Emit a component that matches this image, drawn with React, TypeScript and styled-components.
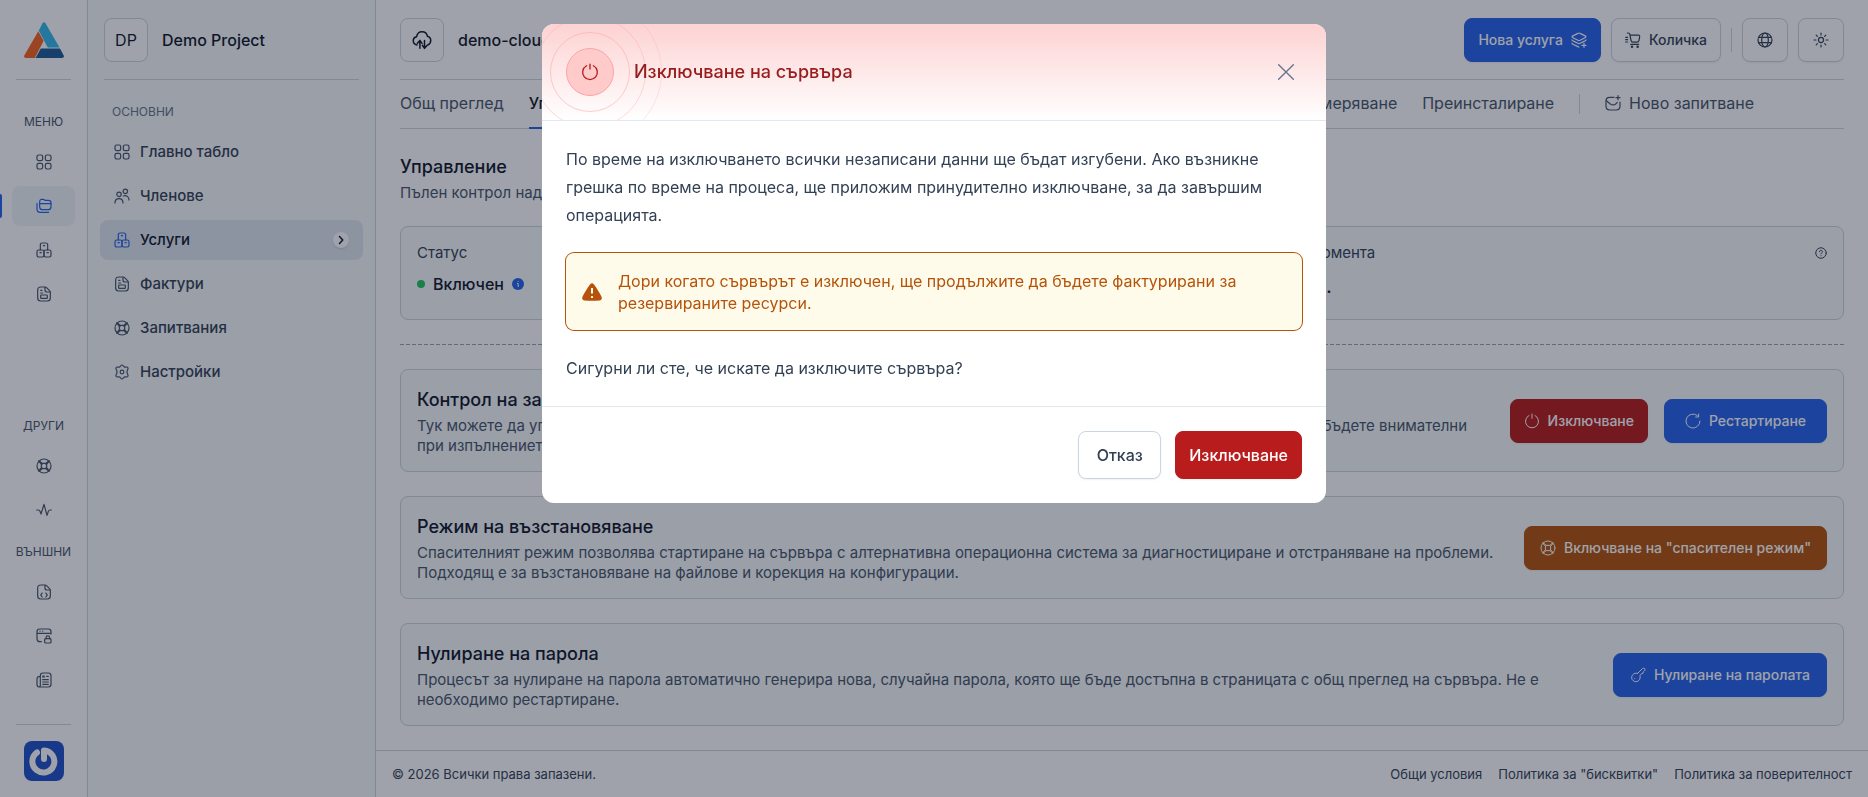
import React from "react";
import styled, { createGlobalStyle } from "styled-components";

const c = {
  white: "#ffffff",
  s50: "#f8fafc",
  s100: "#f1f5f9",
  s200: "#e2e8f0",
  s300: "#cbd5e1",
  s400: "#94a3b8",
  s500: "#64748b",
  s600: "#475569",
  s700: "#334155",
  s900: "#0f172a",
  blue: "#2563eb",
  red: "#b91c1c",
  amber: "#b45309",
};

const Global = createGlobalStyle`
  *, *::before, *::after { box-sizing: border-box; }
  body { margin: 0; background: ${c.white}; }
  body, button { font-family: Inter, "Noto Sans", sans-serif; }
  h1, h2, h3, p, ul { margin: 0; padding: 0; }
  a { color: inherit; text-decoration: none; }
  button { cursor: pointer; }
`;

/* ---------- icons ---------- */

const Svg = styled.svg`
  display: block;
  flex: none;
  fill: none;
  stroke: currentColor;
  stroke-linecap: round;
  stroke-linejoin: round;
`;

const shapes = {
  grid: (
    <>
      <rect x="1.5" y="1.5" width="8.5" height="8.5" rx="2.5" />
      <rect x="14" y="1.5" width="8.5" height="8.5" rx="2.5" />
      <rect x="1.5" y="14" width="8.5" height="8.5" rx="2.5" />
      <rect x="14" y="14" width="8.5" height="8.5" rx="2.5" />
    </>
  ),
  folders: (
    <>
      <path d="M5.5 7V5.500C5.500 3.500 6.500 2 8.500 2h2.200c1.500 0 2 .6 2.800 1.500h5C21.500 3.500 22.500 5 22.500 7.500v5.500c0 3-1.500 4.500-4.500 4.500h-8c-3 0-4.500-1.500-4.500-4.500z" />
      <path d="M5.500 8.500h17M1.500 8v8.500c0 4 1.500 5 5 5H19" />
    </>
  ),
  boxes: (
    <>
      <path d="M6.500 12V4.500c0-2 .8-3 2.800-3h5.400c2 0 2.800 1 2.800 3V12" />
      <rect x="1.500" y="12" width="10.500" height="10.500" rx="2.500" />
      <rect x="12" y="12" width="10.500" height="10.500" rx="2.500" />
      <path d="M11 5.500h2M6 16h2M16.500 16h2" />
    </>
  ),
  invoice: (
    <>
      <path d="M13.500 1.500H7.500C4.500 1.500 2.500 3 2.500 6v12c0 3 1.500 4.500 4.500 4.500h10c3 0 4.500-1.500 4.500-4.500V9.500c0-1-.4-1.700-1.200-2.500l-4.500-4.500c-.7-.7-1.200-1-2.300-1z" />
      <path d="M13.500 2v4c0 2 1 3 3 3h4.500M7 6.500h2M7 10.500h3" />
      <rect x="7" y="13.500" width="10" height="5" rx="1" />
    </>
  ),
  life: (
    <>
      <circle cx="12" cy="12" r="10.500" />
      <rect x="8" y="8" width="8" height="8" rx="2.500" />
      <path d="M8.500 10 4 4.500M10 8.500 4.500 4M15.500 10 20 4.500M14 8.500 19.500 4M8.500 14 4 19.500M10 15.500 4.500 20M15.500 14l4.500 5.500M14 15.500l5.500 4.500" />
    </>
  ),
  pulse: <path d="M1 12h2.500c1.500 0 2 .5 2.500 2l1.500 4L12 3.500 16.500 20l2-6c.5-1.500 1-2 2.500-2h2" />,
  code: (
    <>
      <path d="M13.500 1.500H7.500C4.500 1.500 2.500 3 2.500 6v12c0 3 1.500 4.500 4.500 4.500h10c3 0 4.500-1.500 4.500-4.500V9.500c0-1-.4-1.700-1.200-2.500l-4.500-4.500c-.7-.7-1.200-1-2.300-1z" />
      <path d="M13.500 2v4c0 2 1 3 3 3h4.500M9.500 13.500C8 13.500 8.500 16 7 16.500c1.500.5 1 3 2.500 3M14.500 13.500c1.500 0 1 2.500 2.500 3-1.500.5-1 3-2.500 3" />
    </>
  ),
  browserLock: (
    <>
      <path d="M22.500 9V5.500c0-3-1-4-4-4h-13c-3 0-4 1-4 4V16c0 3 1.500 4.500 4.500 4.500h2M1.500 8h21M6 4.800h.1M10 4.800h.1" />
      <rect x="13" y="16" width="9.500" height="6.500" rx="1.500" />
      <path d="M15 16v-1.500a2.700 2.700 0 0 1 5.500 0V16" />
    </>
  ),
  news: (
    <>
      <path d="M6.500 6.500C3 6.500 1.500 7.500 1.500 10.500v8c0 2.500 1 4 3 4s2-1 2-3V5.500c0-3 1-4 4-4h8c3 0 4 1 4 4v13c0 3-1 4-4 4h-14" />
      <path d="M10 6h2.500M10 7.500h2.500M16 6.500h2.500M10 11.500h8.500M10 15h8.500M10 18.500h8.500" />
    </>
  ),
  people: (
    <>
      <circle cx="7.500" cy="9.500" r="3.300" />
      <circle cx="17" cy="5" r="3.300" />
      <path d="M1.500 22.500c0-4 2-6.500 6-6.500s6 2.500 6 6.500M14 12c5-1.500 8.500 1 8.500 6" />
    </>
  ),
  gear: (
    <>
      <path d="M12 1.500c2 0 2 2.700 4 3.200 1.600.5 3.600-1.200 4.700.6 1.500 2.400-1.200 3.200-1.200 6.700s2.700 4.300 1.200 6.700c-1.100 1.800-3.100.1-4.700.6-2 .5-2 3.200-4 3.200s-2-2.700-4-3.200c-1.600-.5-3.600 1.200-4.700-.6C1.800 16.300 4.500 15.500 4.500 12S1.800 7.700 3.300 5.300C4.400 3.500 6.400 5.200 8 4.700c2-.5 2-3.200 4-3.200z" />
      <circle cx="12" cy="12" r="2.800" />
    </>
  ),
  chevron: <path d="m9 5 6.500 7L9 19" />,
  cloud: (
    <>
      <path d="M6 18C3 17.500 1.500 15.500 1.500 13c0-2.700 1.500-4.500 4-5C6.200 4 8.800 2 12 2c3.500 0 6 2.300 6.500 5.500 2.500.7 4 2.700 4 5.200s-1.500 4.300-3.500 5.300" />
      <path d="M9.500 22V13m-3 3 3-3.500 2.500 3.500M15 12.500v9m-2.500-3 2.500 3.500 3-3.500" />
    </>
  ),
  layers: (
    <>
      <path d="M12 1.500c.6 0 1.200.3 2.400.9l6 3c1.400.7 2.100 1.100 2.100 1.800s-.7 1.100-2.100 1.800l-6 3c-1.200.6-1.800.9-2.400.9s-1.200-.3-2.400-.9l-6-3C2.200 8.300 1.500 7.900 1.500 7.200s.7-1.100 2.100-1.800l6-3c1.200-.6 1.800-.9 2.400-.9z" />
      <path d="M1.500 12c.6 1 1.200 1.200 2.100 1.700l6 2.900c1.200.6 1.800.9 2.400.9s1.200-.3 2.400-.9l6-2.900c.9-.5 1.500-.7 2.100-1.700M1.500 17c.6 1 1.200 1.200 2.100 1.700l6 2.900c.8.500 1.400.8 2.400.9M19.500 17v6M16.500 20h6" />
    </>
  ),
  cart: (
    <>
      <path d="M3.500 1.500H5c1.500 0 2 .5 2.300 2L9 12.500c.3 2 1.200 2.700 3 2.700h6c1.800 0 2.700-.8 3-2.700l1-5.500c.2-1.500-.3-2.300-2-2.300H8M1 8h3M1 11.500h3M1 15h3M8.500 18.500h12" />
      <circle cx="10.500" cy="22" r="1" />
      <circle cx="19" cy="22" r="1" />
    </>
  ),
  globe: (
    <>
      <circle cx="12" cy="12" r="10.500" />
      <ellipse cx="12" cy="12" rx="5" ry="10.500" />
      <path d="M2.500 8h19M2.500 16h19" />
    </>
  ),
  sun: (
    <>
      <circle cx="12" cy="12" r="3.800" />
      <path d="M12 1.500v3M12 19.500v3M1.500 12h3M19.500 12h3M4.800 4.800l1.700 1.700M17.500 17.500l1.700 1.700M19.200 4.800l-1.700 1.700M6.500 17.500l-1.700 1.700" />
    </>
  ),
  mail: (
    <>
      <path d="M13.500 3.500H7c-4 0-5.500 1.500-5.500 5.500v8c0 4 1.500 5.500 5.500 5.500h10c4 0 5.500-1.500 5.500-5.500v-6.500" />
      <path d="m2 8.500 6 5c2.700 2 5.300 2 8 0l2.500-2.500M19.500 1v6M16.500 4h6" />
    </>
  ),
  power: <path d="M12 1.500v6.500M7.500 3.700a9.800 9.800 0 1 0 9 0" />,
  restart: <path d="M22.500 12A10.500 10.500 0 1 1 18.500 3.800M20.500 1.500v4.500h-4.500" />,
  key: (
    <>
      <path d="M11.500 9.500 18 3c1.300-1.300 2.800-1.800 3.900-.8s.8 2.500-.4 3.800l-1.700 1.500-.3 2-2.200.7-2.500 2.500c.8 2.800.5 5.200-1.300 7.200-2.300 2.600-6.200 2.800-8.800.6-2.700-2.300-3-6-.8-8.600 2-2.300 4.600-3 7.600-2.400z" />
      <path d="M7 17.500h.1" />
    </>
  ),
  help: (
    <>
      <circle cx="12" cy="12" r="10.500" />
      <path d="M9 9.500C9 7.700 10.300 6.700 12 6.700s3 1 3 2.800c0 2-3 2-3 4.300M12 17.300h.1" />
    </>
  ),
  close: <path d="M1 1l22 22M23 1 1 23" />,
};

type IconName = keyof typeof shapes;

const Icon = ({ name, size = 16, weight = 1.8 }: { name: IconName; size?: number; weight?: number }) => (
  <Svg width={size} height={size} viewBox="0 0 24 24" strokeWidth={weight} aria-hidden="true">
    {shapes[name]}
  </Svg>
);

const Logo = () => (
  <svg width="40" height="36" viewBox="0 0 40 36" role="img" aria-label="Начало">
    <path fill="#32b8ea" d="M18.500 1.200c.8-1.400 2.200-1.400 3 0L35.500 25.500H25c-.9 0-1.400-.3-1.800-1L14.800 8.500z" />
    <path fill="#f86320" d="M14.300 9.300 19.200 18c.3.700.3 1.100 0 1.700L10.800 36H2c-1.600 0-2.500-1.300-1.600-2.800z" />
    <path fill="#1b5d97" d="M16.800 26.500H36l3.600 6.700c.8 1.500 0 2.800-1.600 2.800H11.500z" />
  </svg>
);

const Avatar = () => (
  <svg width="40" height="40" viewBox="0 0 40 40" role="img" aria-label="Профил">
    <rect width="40" height="40" rx="8" fill="#1e50c8" />
    <path d="M20 9.500v8.500M13 11.500a11 11 0 1 0 7-2" fill="none" stroke="#fff" strokeWidth="6" strokeLinecap="round" />
  </svg>
);

const InfoBadge = () => (
  <svg width="12" height="12" viewBox="0 0 12 12" aria-label="Информация" role="img">
    <circle cx="6" cy="6" r="6" fill={c.blue} />
    <path d="M5 5.500h1.200V9M6.200 3v.8" fill="none" stroke="#fff" />
  </svg>
);

const WarningSign = () => (
  <svg width="20" height="18" viewBox="0 0 20 18" aria-hidden="true">
    <path
      fill={c.amber}
      d="M8.200 1.200c.9-1.300 2.700-1.300 3.600 0 2.700 3.600 5.500 8 7.600 12.300.9 1.800.2 3.800-2 4-4.900.4-9.900.4-14.800 0-2.200-.2-2.900-2.200-2-4C2.700 9.200 5.500 4.800 8.200 1.200z"
    />
    <path d="M10 5v5.500M10 13v2" stroke="#fffbeb" strokeWidth="2" />
  </svg>
);

/* ---------- shell ---------- */

const Shell = styled.div`
  display: flex;
  min-height: 100vh;
  color: ${c.s700};
  font-size: 15px;
  line-height: 20px;
`;

const Rail = styled.nav`
  display: flex;
  flex-direction: column;
  width: 88px;
  flex: none;
  padding: 0 12px 16px;
  border-right: 1px solid ${c.s300};
`;

const RailHead = styled.div`
  display: flex;
  justify-content: center;
  align-items: center;
  height: 80px;
  margin: 0 4px;
  border-bottom: 1px solid ${c.s300};
`;

const RailGroup = styled.div<{ $top: number; $push?: boolean }>`
  margin-top: ${(p) => (p.$push ? "auto" : `${p.$top}px`)};
`;

const RailLabel = styled.div`
  height: 20px;
  margin: 0 -12px 10px;
  text-align: center;
  font-size: 12px;
  color: ${c.s600};
`;

const RailLink = styled.a<{ $active?: boolean }>`
  position: relative;
  display: flex;
  align-items: center;
  justify-content: center;
  height: 40px;
  border-radius: 8px;
  color: ${(p) => (p.$active ? c.blue : c.s600)};
  background: ${(p) => (p.$active ? c.s100 : "transparent")};
  & + & {
    margin-top: 4px;
  }
  &::before {
    content: "";
    display: ${(p) => (p.$active ? "block" : "none")};
    position: absolute;
    left: -12px;
    width: 2px;
    height: 24px;
    background: ${c.blue};
    border-radius: 0 2px 2px 0;
  }
`;

const RailFoot = styled.div`
  display: flex;
  justify-content: center;
  margin: 24px 4px 0;
  padding-top: 16px;
  border-top: 1px solid ${c.s300};
`;

const Side = styled.nav`
  width: 288px;
  flex: none;
  padding: 0 12px;
  background: ${c.s50};
  border-right: 1px solid ${c.s300};
`;

const SideHead = styled.div`
  display: flex;
  align-items: center;
  gap: 14px;
  height: 80px;
  margin: 0 4px;
  border-bottom: 1px solid ${c.s300};
`;

const Tile = styled.div`
  display: flex;
  align-items: center;
  justify-content: center;
  width: 44px;
  height: 44px;
  border: 1px solid ${c.s300};
  border-radius: 8px;
  background: ${c.white};
  color: ${c.s900};
  font-size: 16px;
`;

const HeadName = styled.h1`
  font-size: 16px;
  font-weight: 500;
  line-height: 24px;
  color: ${c.s900};
`;

const SideLabel = styled.div`
  padding: 22px 12px 10px;
  font-size: 12px;
  color: ${c.s500};
`;

const SideLink = styled.a<{ $active?: boolean }>`
  display: flex;
  align-items: center;
  gap: 10px;
  height: 40px;
  margin-bottom: 4px;
  padding: 0 14px;
  border-radius: 8px;
  font-weight: 500;
  background: ${(p) => (p.$active ? c.s200 : "transparent")};
  color: ${(p) => (p.$active ? c.s900 : c.s700)};
  & > svg {
    color: ${(p) => (p.$active ? c.blue : c.s600)};
  }
`;

const Dot = styled.span`
  display: flex;
  align-items: center;
  justify-content: center;
  width: 16px;
  height: 16px;
  margin-left: auto;
  border-radius: 50%;
  background: ${c.white};
  box-shadow: 0 1px 2px rgba(15, 23, 42, 0.15);
`;

const Main = styled.div`
  display: flex;
  flex-direction: column;
  flex: 1;
  min-width: 0;
`;

const Content = styled.main`
  flex: 1;
  padding: 0 24px 24px;
`;

const TopBar = styled.header`
  display: flex;
  align-items: center;
  height: 80px;
  border-bottom: 1px solid ${c.s300};
`;

const TopTitle = styled.div`
  display: flex;
  align-items: center;
  gap: 14px;
  margin-right: auto;
`;

const TopActions = styled.div`
  display: flex;
  align-items: center;
  gap: 10px;
`;

const Rule = styled.span<{ $h: number }>`
  width: 1px;
  height: ${(p) => p.$h}px;
  background: ${c.s300};
`;

const tones = {
  blue: [c.blue, c.white, c.blue],
  red: [c.red, c.white, c.red],
  amber: [c.amber, c.white, c.amber],
  plain: [c.white, c.s700, c.s300],
};

const Button = styled.button<{ $tone: keyof typeof tones; $large?: boolean; $square?: boolean; $min?: number }>`
  display: flex;
  align-items: center;
  justify-content: center;
  gap: 8px;
  height: ${(p) => (p.$large ? 48 : 44)}px;
  width: ${(p) => (p.$square ? "46px" : "auto")};
  min-width: ${(p) => p.$min ?? 0}px;
  padding: 0 ${(p) => (p.$square ? 0 : 13)}px;
  border: 1px solid ${(p) => tones[p.$tone][2]};
  border-radius: 8px;
  background: ${(p) => tones[p.$tone][0]};
  color: ${(p) => tones[p.$tone][1]};
  font-size: ${(p) => (p.$large ? 16 : 14)}px;
  font-weight: 500;
  white-space: nowrap;
  box-shadow: 0 1px 2px rgba(15, 23, 42, 0.06);
`;

const Tabs = styled.nav`
  display: flex;
  align-items: center;
  height: 49px;
  gap: 25px;
  padding-right: 90px;
  border-bottom: 1px solid ${c.s300};
  font-size: 16px;
  white-space: nowrap;
`;

const TabSet = styled.div`
  display: flex;
  gap: 25px;
  flex: 1 1 0;
  min-width: 0;
  overflow: hidden;
`;

const Tab = styled.a<{ $active?: boolean }>`
  display: flex;
  align-items: center;
  gap: 8px;
  height: 49px;
  color: ${(p) => (p.$active ? c.s900 : c.s600)};
  font-weight: ${(p) => (p.$active ? 500 : 400)};
  border-bottom: 2px solid ${(p) => (p.$active ? c.blue : "transparent")};
`;

const Heading = styled.h2`
  font-size: 18px;
  font-weight: 500;
  line-height: 28px;
  color: ${c.s900};
`;

const Text = styled.p`
  color: ${c.s600};
  white-space: pre-line;
`;

const PageHead = styled.div`
  display: grid;
  gap: 2px;
  padding: 24px 0 23px;
`;

const Stats = styled.div`
  display: grid;
  grid-template-columns: 1fr 1fr;
  gap: 24px;
`;

const Stat = styled.section`
  height: 94px;
  padding: 16px;
  border: 1px solid ${c.s300};
  border-radius: 8px;
  background: ${c.s50};
`;

const StatHead = styled.div`
  display: flex;
  align-items: center;
  justify-content: space-between;
  color: ${c.s700};
`;

const StatValue = styled.div<{ $big?: boolean }>`
  display: flex;
  align-items: center;
  gap: 8px;
  margin-top: ${(p) => (p.$big ? 12 : 9)}px;
  font-size: ${(p) => (p.$big ? 18 : 16)}px;
  font-weight: 500;
  line-height: 24px;
  color: ${c.s900};
`;

const Led = styled.span`
  width: 8px;
  height: 8px;
  border-radius: 50%;
  background: #22c55e;
`;

const Dashes = styled.hr`
  height: 1px;
  margin: 24px 0;
  border: 0;
  background: repeating-linear-gradient(90deg, ${c.s400} 0 4px, transparent 4px 6px);
`;

const Card = styled.section`
  display: flex;
  align-items: center;
  gap: 16px;
  min-height: 103px;
  padding: 0 16px;
  border: 1px solid ${c.s300};
  border-radius: 8px;
  background: ${c.s50};
  & + & {
    margin-top: 24px;
  }
`;

const CardBody = styled.div`
  display: grid;
  gap: 2px;
  flex: 1;
  min-width: 0;
`;

const Footer = styled.footer`
  display: flex;
  align-items: center;
  gap: 16px;
  height: 47px;
  padding: 0 16px;
  border-top: 1px solid ${c.s300};
  font-size: 13px;
  color: ${c.s700};
  & > span {
    margin-right: auto;
  }
`;

/* ---------- dialog ---------- */

const Backdrop = styled.div`
  position: fixed;
  inset: 0;
  display: flex;
  align-items: flex-start;
  justify-content: center;
  padding: 24px;
  background: rgba(15, 23, 42, 0.4);
`;

const Dialog = styled.div`
  width: 100%;
  max-width: 784px;
  overflow: hidden;
  border-radius: 12px;
  background: ${c.white};
  color: ${c.s700};
  font-size: 16px;
  line-height: 28px;
`;

const DialogHead = styled.div`
  position: relative;
  display: flex;
  align-items: center;
  gap: 20px;
  height: 97px;
  padding: 0 24px;
  overflow: hidden;
  border-bottom: 1px solid ${c.s200};
  background: linear-gradient(#fdd2d2, #ffffff);
`;

const DialogTitle = styled.h2`
  position: relative;
  margin-right: auto;
  font-size: 18px;
  font-weight: 500;
  color: #991b1b;
`;

const Emblem = styled.span`
  position: relative;
  display: flex;
  align-items: center;
  justify-content: center;
  width: 48px;
  height: 48px;
  border: 1px solid #fca5a5;
  border-radius: 50%;
  background: #fecaca;
  color: ${c.red};
`;

const Ring = styled.span<{ $r: number; $o: number }>`
  position: absolute;
  top: calc(50% - ${(p) => p.$r}px);
  left: calc(50% - ${(p) => p.$r}px);
  width: ${(p) => p.$r * 2}px;
  height: ${(p) => p.$r * 2}px;
  border: 1px solid #fca5a5;
  border-radius: 50%;
  opacity: ${(p) => p.$o};
`;

const CloseButton = styled.button`
  display: flex;
  align-items: center;
  justify-content: center;
  width: 32px;
  height: 32px;
  padding: 0;
  border: 0;
  background: none;
  color: ${c.s500};
`;

const DialogBody = styled.div`
  display: grid;
  gap: 24px;
  padding: 24px;
  white-space: pre-line;
`;

const Alert = styled.div`
  display: flex;
  align-items: center;
  gap: 16px;
  min-height: 77px;
  padding: 0 16px;
  border-radius: 8px;
  background: #fffbeb;
  box-shadow: 0 0 0 1px ${c.amber};
  color: ${c.amber};
  line-height: 22px;
`;

const DialogFoot = styled.div`
  display: flex;
  justify-content: flex-end;
  gap: 14px;
  padding: 24px;
  border-top: 1px solid ${c.s200};
`;

/* ---------- data ---------- */

const sideItems: [IconName, string][] = [
  ["grid", "Главно табло"],
  ["people", "Членове"],
  ["boxes", "Услуги"],
  ["invoice", "Фактури"],
  ["life", "Запитвания"],
  ["gear", "Настройки"],
];

const RailLinks = ({ items, active }: { items: [IconName, string][]; active?: IconName }) => (
  <>
    {items.map(([icon, label]) => (
      <RailLink key={icon} href="#" aria-label={label} $active={icon === active}>
        <Icon name={icon} />
      </RailLink>
    ))}
  </>
);

export default function App() {
  return (
    <div lang="bg">
      <Global />
      <Shell>
        <Rail>
          <RailHead>
            <Logo />
          </RailHead>
          <RailGroup $top={32}>
            <RailLabel>МЕНЮ</RailLabel>
            <RailLinks
              active="folders"
              items={[
                ["grid", "Табло"],
                ["folders", "Проекти"],
                ["boxes", "Услуги"],
                ["invoice", "Фактури"],
              ]}
            />
          </RailGroup>
          <RailGroup $top={0} $push>
            <RailLabel>ДРУГИ</RailLabel>
            <RailLinks
              items={[
                ["life", "Помощ"],
                ["pulse", "Статус"],
              ]}
            />
          </RailGroup>
          <RailGroup $top={12}>
            <RailLabel>ВЪНШНИ</RailLabel>
            <RailLinks
              items={[
                ["code", "API"],
                ["browserLock", "Сигурност"],
                ["news", "Новини"],
              ]}
            />
          </RailGroup>
          <RailFoot>
            <Avatar />
          </RailFoot>
        </Rail>

        <Side>
          <SideHead>
            <Tile>DP</Tile>
            <HeadName>Demo Project</HeadName>
          </SideHead>
          <SideLabel>ОСНОВНИ</SideLabel>
          {sideItems.map(([icon, label]) => {
            const active = label === "Услуги";
            return (
              <SideLink key={label} href="#" $active={active}>
                <Icon name={icon} />
                {label}
                {active && (
                  <Dot>
                    <Icon name="chevron" size={12} weight={3} />
                  </Dot>
                )}
              </SideLink>
            );
          })}
        </Side>

        <Main>
          <Content>
            <TopBar>
              <TopTitle>
                <Tile>
                  <Icon name="cloud" size={20} />
                </Tile>
                <HeadName as="div">demo-cloud</HeadName>
              </TopTitle>
              <TopActions>
                <Button $tone="blue">
                  Нова услуга
                  <Icon name="layers" />
                </Button>
                <Button $tone="plain">
                  <Icon name="cart" />
                  Количка
                </Button>
                <Rule $h={24} />
                <Button $tone="plain" $square aria-label="Език">
                  <Icon name="globe" />
                </Button>
                <Button $tone="plain" $square aria-label="Тема">
                  <Icon name="sun" />
                </Button>
              </TopActions>
            </TopBar>

            <Tabs>
              <TabSet>
                <Tab href="#">Общ преглед</Tab>
                <Tab href="#" $active>
                  Управление
                </Tab>
                <Tab href="#">Конзола</Tab>
                <Tab href="#">Мрежа</Tab>
              </TabSet>
              <Tab href="#">Преоразмеряване</Tab>
              <Tab href="#">Преинсталиране</Tab>
              <Rule $h={20} />
              <Tab href="#">
                <Icon name="mail" />
                Ново запитване
              </Tab>
            </Tabs>

            <PageHead>
              <Heading>Управление</Heading>
              <Text>Пълен контрол над сървъра</Text>
            </PageHead>

            <Stats>
              <Stat>
                <StatHead>Статус</StatHead>
                <StatValue>
                  <Led />
                  Включен
                  <InfoBadge />
                </StatValue>
              </Stat>
              <Stat>
                <StatHead>
                  Генерирани такси до момента
                  <Icon name="help" size={12} weight={2} />
                </StatHead>
                <StatValue $big>10,00 EUR / 19,56 лв.</StatValue>
              </Stat>
            </Stats>

            <Dashes />

            <Card>
              <CardBody>
                <Heading>Контрол на захранването</Heading>
                <Text>
                  {"Тук можете да управлявате захранването на вашия сървър, като го изключвате, включвате и/или го рестартирате. Моля, бъдете внимателни\nпри изпълнението на тези действия."}
                </Text>
              </CardBody>
              <Button $tone="red">
                <Icon name="power" weight={1.5} />
                Изключване
              </Button>
              <Button $tone="blue" $min={163}>
                <Icon name="restart" weight={1.5} />
                Рестартиране
              </Button>
            </Card>
            <Card>
              <CardBody>
                <Heading>Режим на възстановяване</Heading>
                <Text>
                  {"Спасителният режим позволява стартиране на сървъра с алтернативна операционна система за диагностициране и отстраняване на проблеми.\nПодходящ е за възстановяване на файлове и корекция на конфигурации."}
                </Text>
              </CardBody>
              <Button $tone="amber" $min={303}>
                <Icon name="life" weight={1.5} />
                Включване на "спасителен режим"
              </Button>
            </Card>
            <Card>
              <CardBody>
                <Heading>Нулиране на парола</Heading>
                <Text>
                  {"Процесът за нулиране на парола автоматично генерира нова, случайна парола, която ще бъде достъпна в страницата с общ преглед на сървъра. Не е\nнеобходимо рестартиране."}
                </Text>
              </CardBody>
              <Button $tone="blue" $min={214}>
                <Icon name="key" weight={1.5} />
                Нулиране на паролата
              </Button>
            </Card>
          </Content>

          <Footer>
            <span>© 2026 Всички права запазени.</span>
            <a href="#">Общи условия</a>
            <a href="#">Политика за "бисквитки"</a>
            <a href="#">Политика за поверителност</a>
          </Footer>
        </Main>
      </Shell>

      <Backdrop>
        <Dialog role="dialog" aria-modal="true" aria-labelledby="dialog-title">
          <DialogHead>
            <Emblem>
              <Ring $r={40} $o={0.55} />
              <Ring $r={56} $o={0.4} />
              <Ring $r={72} $o={0.25} />
              <Icon name="power" size={18} />
            </Emblem>
            <DialogTitle id="dialog-title">Изключване на сървъра</DialogTitle>
            <CloseButton aria-label="Затваряне">
              <Icon name="close" weight={2} />
            </CloseButton>
          </DialogHead>
          <DialogBody>
            <p>
              {"По време на изключването всички незаписани данни ще бъдат изгубени. Ако възникне\nгрешка по време на процеса, ще приложим принудително изключване, за да завършим\nоперацията."}
            </p>
            <Alert role="alert">
              <WarningSign />
              <p>{"Дори когато сървърът е изключен, ще продължите да бъдете фактурирани за\nрезервираните ресурси."}</p>
            </Alert>
            <p>Сигурни ли сте, че искате да изключите сървъра?</p>
          </DialogBody>
          <DialogFoot>
            <Button $tone="plain" $large $min={83}>
              Отказ
            </Button>
            <Button $tone="red" $large>
              Изключване
            </Button>
          </DialogFoot>
        </Dialog>
      </Backdrop>
    </div>
  );
}
